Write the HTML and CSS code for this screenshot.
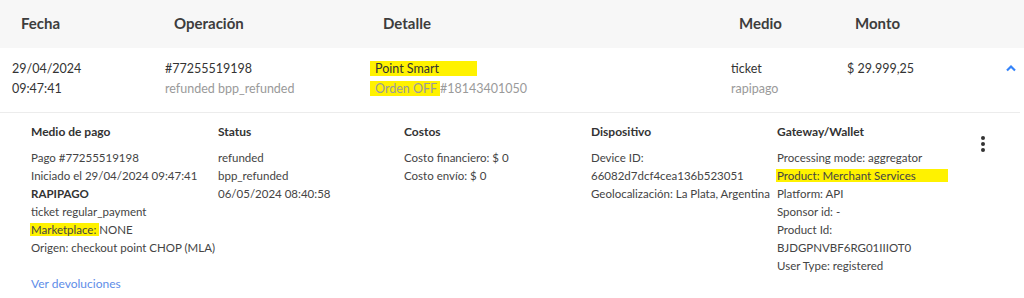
FILE: index.html
```html
<!DOCTYPE html>
<html lang="es">
<head>
    <meta charset="UTF-8">
    <title>Movimientos</title>
    <link rel="stylesheet" href="styles.css">
</head>
<body>
    <div class="tabla">
        <div class="cabecera">
            <div>Fecha</div>
            <div>Operación</div>
            <div>Detalle</div>
            <div>Medio</div>
            <div>Monto</div>
        </div>

        <div class="fila">
            <div>
                <div>29/04/2024</div>
                <div>09:47:41</div>
            </div>
            <div>
                <div>#77255519198</div>
                <div class="gris">refunded bpp_refunded</div>
            </div>
            <div class="col-detalle">
                <div><span class="marca marca-ancha">Point Smart</span></div>
                <div class="gris"><span class="marca">Orden OFF </span>#18143401050</div>
            </div>
            <div>
                <div>ticket</div>
                <div class="gris">rapipago</div>
            </div>
            <div class="monto">
                <div>$ 29.999,25</div>
                <svg class="chevron" width="12" height="8" viewBox="0 0 12 8">
                    <path d="M2 6.5 L6 2.5 L10 6.5" fill="none" stroke="#3483fa" stroke-width="2.2"/>
                </svg>
            </div>
        </div>

        <!-- Detalle expandido -->
        <div class="detalle">
            <div class="detalle-grid">
                <div class="col">
                    <h4>Medio de pago</h4>
                    <p>Pago #77255519198</p>
                    <p>Iniciado el 29/04/2024 09:47:41</p>
                    <p class="fuerte">RAPIPAGO</p>
                    <p>ticket regular_payment</p>
                    <p><span class="marca">Marketplace: </span>NONE</p>
                    <p>Origen: checkout point CHOP (MLA)</p>
                </div>
                <div class="col">
                    <h4>Status</h4>
                    <p>refunded</p>
                    <p>bpp_refunded</p>
                    <p>06/05/2024 08:40:58</p>
                </div>
                <div class="col">
                    <h4>Costos</h4>
                    <p>Costo financiero: $ 0</p>
                    <p>Costo envío: $ 0</p>
                </div>
                <div class="col">
                    <h4>Dispositivo</h4>
                    <p>Device ID:</p>
                    <p>66082d7dcf4cea136b523051</p>
                    <p>Geolocalización: La Plata, Argentina</p>
                </div>
                <div class="col">
                    <h4>Gateway/Wallet</h4>
                    <p>Processing mode: aggregator</p>
                    <p><span class="marca marca-producto">Product: Merchant Services</span></p>
                    <p>Platform: API</p>
                    <p>Sponsor id: -</p>
                    <p>Product Id:</p>
                    <p>BJDGPNVBF6RG01IIIOT0</p>
                    <p>User Type: registered</p>
                </div>
                <div class="acciones">
                    <span class="punto"></span>
                    <span class="punto"></span>
                    <span class="punto"></span>
                </div>
            </div>
            <a class="link" href="#">Ver devoluciones</a>
        </div>
    </div>
</body>
</html>
```

FILE: styles.css
```css
body {
    margin: 0;
    padding: 0;
    background: #fff;
    font-family: Lato, Arial, sans-serif;
    color: #333;
}
.cabecera {
    display: grid;
    grid-template-columns: 153px 209px 356px 116px 1fr;
    height: 48px;
    align-items: center;
    padding-left: 21px;
    padding-bottom: 3px;
    box-sizing: border-box;
    background: #f7f7f7;
    font-size: 15px;
    font-weight: 700;
    color: #3d3d3d;
}
.fila {
    display: grid;
    grid-template-columns: 153px 209px 357px 116px 1fr;
    padding: 11px 0 0 12px;
    height: 65px;
    box-sizing: border-box;
    font-size: 12.5px;
    line-height: 19.5px;
    color: #333;
    border-bottom: 1px solid #ececec;
    margin-right: 4px;
}
.col-detalle {
    padding-left: 1px;
}
.gris {
    color: #9a9a9a;
}
.marca {
    background: #fff200;
    padding-left: 5px;
    margin-left: -5px;
}
.marca-ancha {
    padding-right: 38px;
    color: #333;
}
.monto {
    display: flex;
    justify-content: space-between;
    padding-right: 3px;
}
.chevron {
    margin-top: 5px;
}
.detalle {
    padding: 10px 0 0 31px;
}
.detalle-grid {
    display: grid;
    grid-template-columns: 187px 186px 187px 186px 190px 1fr;
    white-space: nowrap;
}
.col h4 {
    margin: 0 0 8px 0;
    font-size: 12px;
    font-weight: 700;
    line-height: 18px;
    color: #333;
}
.col p {
    margin: 0;
    font-size: 11.5px;
    line-height: 18px;
    color: #444;
}
.col .fuerte {
    font-weight: 700;
    color: #333;
}
.col .marca {
    padding-left: 1px;
    margin-left: -1px;
}
.col .marca-producto {
    padding-right: 32px;
}
.acciones {
    display: flex;
    flex-direction: column;
    gap: 2px;
    padding: 13px 0 0 14px;
}
.punto {
    width: 4px;
    height: 4px;
    border-radius: 50%;
    background: #333;
}
.link {
    display: block;
    width: fit-content;
    font-size: 12px;
    line-height: 18px;
    color: #5e8de8;
    text-decoration: none;
}
```
